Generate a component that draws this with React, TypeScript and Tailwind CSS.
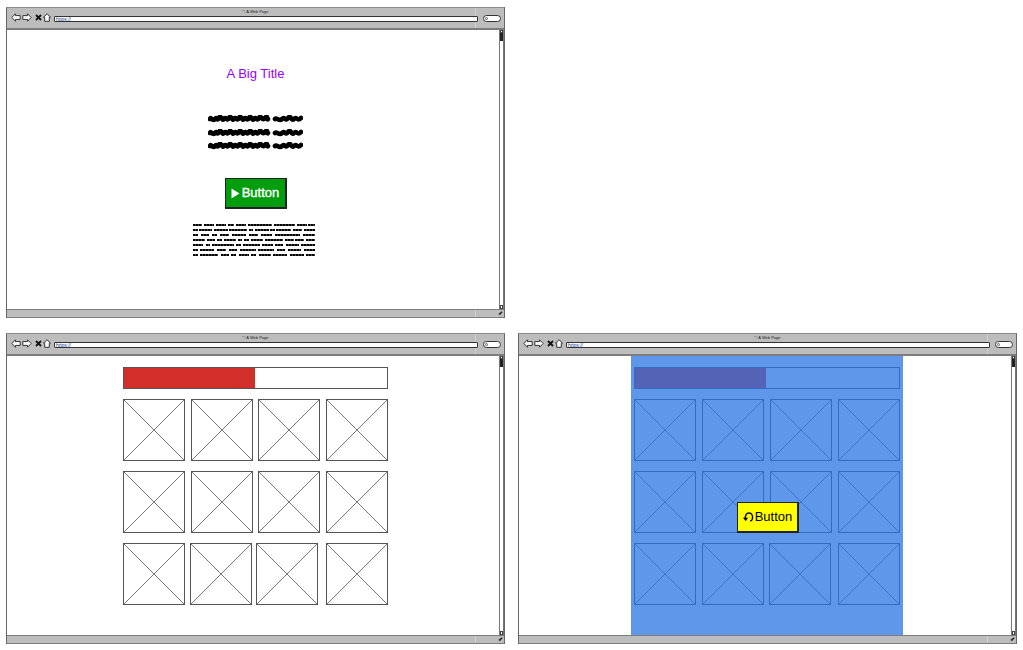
import React from 'react';

const bodyLines = [
  [10, 10, 11, 7, 11, 25, 23, 10, 7],
  [5, 14, 15, 19, 5, 15, 5, 16, 10, 12],
  [5, 9, 5, 10, 14, 10, 12, 26, 13],
  [13, 9, 5, 13, 5, 5, 13, 20, 9, 9, 10],
  [11, 5, 23, 5, 18, 11, 9, 14, 15],
  [5, 15, 10, 9, 17, 17, 9, 14, 12],
  [5, 19, 9, 5, 11, 5, 13, 15, 15, 9],
];

// margins of the last row, its cells sit a bit off the rows above
const lastRowOffsets = ['', 'ml-[5px]', 'ml-[4px]', 'ml-[8px]'];
const lastRowOffsetsWide = ['', 'ml-[6px]', 'ml-[5px]', 'ml-[7px]'];

function Scribble() {
  const wave =
    'M2 4 C3 1 5 7 7 4 S9 7 11 3 S14 7 16 4 S19 7 21 3 S24 7 26 4 S29 7 31 3 S34 7 36 4 S39 7 41 3 S44 7 46 4 S49 7 51 3 S54 7 57 3 S59 6 60 4';
  const wave2 = 'M67 4 C69 2 71 7 74 4 S77 7 80 3 S83 7 86 4 S89 7 93 3';
  return (
    <svg width="95" height="9" viewBox="0 0 95 9" fill="none" stroke="#000" strokeWidth="4.6" strokeLinecap="round">
      <path d={wave} />
      <path d={wave2} />
    </svg>
  );
}

function PlayIcon() {
  return (
    <svg width="9" height="11" viewBox="0 0 9 11" fill="#fff">
      <path d="M0.5 0.5 L8.5 5.5 L0.5 10.5 Z" />
    </svg>
  );
}

function RefreshIcon() {
  return (
    <svg width="11" height="10" viewBox="0 0 11 10" fill="none" stroke="#000" strokeWidth="1.4">
      <path d="M2.6 7 C1.6 3.5 3.6 1 6 1 C8.6 1 10.4 3.6 9.2 7.5 C8.8 8.4 8 8.8 7.2 9" />
      <path d="M0 5.8 L2.8 9.2 L5 5.8 Z" fill="#000" stroke="none" />
    </svg>
  );
}

function ChromeIcons() {
  return (
    <div className="mb-[2px] flex items-center">
      <svg width="10" height="9" viewBox="0 0 10 9" fill="#fff" stroke="#333" strokeWidth="1">
        <path d="M0.8 4.5 L4.5 0.8 V2.6 H9.2 V6.4 H4.5 V8.2 Z" />
      </svg>
      <svg width="10" height="9" viewBox="0 0 10 9" fill="#fff" stroke="#333" strokeWidth="1" className="ml-[1px]">
        <path d="M9.2 4.5 L5.5 0.8 V2.6 H0.8 V6.4 H5.5 V8.2 Z" />
      </svg>
      <svg width="7" height="7" viewBox="0 0 7 7" stroke="#111" strokeWidth="1.8" className="ml-[3px]">
        <path d="M1 1 L6 6 M6 1 L1 6" />
      </svg>
      <svg width="8" height="9" viewBox="0 0 8 9" fill="#fff" stroke="#333" strokeWidth="1" className="ml-[1px]">
        <path d="M4 0.7 L7.5 4.2 H6.3 V8.3 H1.7 V4.2 H0.5 Z" />
      </svg>
    </div>
  );
}

function Window({ children }: { children?: React.ReactNode }) {
  return (
    <div className="relative flex h-[311px] w-[499px] flex-col border-x border-t border-x-[#666] border-t-[#8a8a8a] bg-white">
      <div className="relative h-[22px] shrink-0 border-b-2 border-b-[#7d7d7d] bg-[#bdbdbd]">
        <div className="absolute bottom-0 right-[28px] top-0 w-px bg-[#d2d2d2]" />
        <div className="absolute inset-x-0 top-[1px] text-center text-[4px] leading-[5px] text-[#222]">🗋 A Web Page</div>
        <div className="relative flex h-full items-center pl-[4px] pr-[3px] pt-[1px]">
          <ChromeIcons />
          <div className="ml-[3px] flex h-[6px] flex-1 items-center rounded-[1px] border border-[#333] bg-white pl-[1px] text-[5px] leading-[4px] text-[#25408f]">
            https://
          </div>
          <div className="ml-[5px] flex h-[7px] w-[18px] items-center rounded-full border border-[#333] bg-white pl-[1px]">
            <div className="h-[3px] w-[3px] rounded-full border border-[#555]" />
          </div>
        </div>
      </div>
      <div className="relative min-h-0 flex-1">
        {children}
        <div className="absolute inset-y-0 right-0 flex w-[5px] flex-col items-center justify-between border-x border-x-[#777] bg-white">
          <div className="flex flex-col items-center">
            <div className="h-[3px] w-[3px] border border-[#444]" />
            <div className="h-[8px] w-[3px] bg-[#222]" />
          </div>
          <div className="h-[4px] w-[3px] border border-[#444]" />
        </div>
      </div>
      <div className="relative flex h-[9px] shrink-0 justify-end border-y border-y-[#7d7d7d] bg-[#bdbdbd] pr-[1px]">
        <div className="absolute bottom-0 right-[28px] top-0 w-px bg-[#d2d2d2]" />
        <div className="text-[6px] leading-[6px] text-[#222]">⬋</div>
      </div>
    </div>
  );
}

function LandingContent() {
  return (
    <div className="flex flex-col items-center">
      <h1 className="mt-[36px] text-[13px] leading-[16px] text-[#9900ff]">A Big Title</h1>
      <div className="mt-[33px] flex flex-col gap-[4.5px]">
        <Scribble />
        <Scribble />
        <Scribble />
      </div>
      <button className="mt-[27px] flex h-[31px] w-[62px] items-center justify-center gap-[2px] border border-b-2 border-r-2 border-[#222] bg-[#009d0d] text-[13px] text-white [-webkit-text-stroke:0.35px_white]">
        <PlayIcon />
        Button
      </button>
      <div className="mr-[3px] mt-[15px] flex w-[122px] flex-col gap-[3px]">
        {bodyLines.map((line, i) => (
          <div key={i} className="flex h-[2px] justify-between">
            {line.map((w, j) => (
              <span
                key={j}
                className="h-[2px] bg-[repeating-linear-gradient(90deg,#000_0_2px,#444_2px_3px)]"
                style={{ width: w * 0.94 }}
              />
            ))}
          </div>
        ))}
      </div>
    </div>
  );
}

function Placeholder({ className = '' }: { className?: string }) {
  return (
    <svg width="62" height="62" viewBox="0 0 62 62" fill="#fff" className={`block shrink-0 ${className}`}>
      <path d="M0.5 0.5 L61.5 61.5 M61.5 0.5 L0.5 61.5" stroke="#777" strokeWidth="1" />
      <rect x="0.5" y="0.5" width="61" height="61" fill="none" stroke="#555" strokeWidth="1" />
    </svg>
  );
}

function GalleryContent({ wide = false }: { wide?: boolean }) {
  const width = wide ? 'w-[266px]' : 'w-[265px]';
  const offsets = wide ? lastRowOffsetsWide : lastRowOffsets;
  return (
    <div className={`flex flex-col items-center ${wide ? 'pr-[1px]' : ''}`}>
      <div className={`mt-[11px] flex h-[22px] border border-[#555] bg-white ${width}`}>
        <div className="h-full w-[131px] bg-[#d32f2a]" />
      </div>
      <div className={`mt-[10px] flex flex-col gap-[10px] ${width}`}>
        {[0, 1].map((row) => (
          <div key={row} className="flex justify-between">
            {[0, 1, 2, 3].map((col) => (
              <Placeholder key={col} />
            ))}
          </div>
        ))}
        <div className="flex">
          {offsets.map((offset, col) => (
            <Placeholder key={col} className={offset} />
          ))}
        </div>
      </div>
    </div>
  );
}

export default function App() {
  return (
    <div className="h-[650px] w-[1023px] overflow-hidden bg-white pl-[6px] pt-[7px]" style={{ fontFamily: '"Liberation Sans", Arial, sans-serif' }}>
      <div className="grid grid-cols-[499px_499px] grid-rows-[311px_311px] gap-x-[13px] gap-y-[15px]">
        <Window>
          <LandingContent />
        </Window>
        <div />
        <Window>
          <GalleryContent />
        </Window>
        <Window>
          <GalleryContent wide />
          <div className="absolute inset-y-0 left-[112px] w-[272px] bg-[#2975e4]/75" />
          <button className="absolute left-[218px] top-[146px] flex h-[31px] w-[62px] items-center justify-center gap-[1px] border border-b-2 border-r-2 border-[#222] bg-[#ffff00] text-[13px] text-black">
            <RefreshIcon />
            Button
          </button>
        </Window>
      </div>
    </div>
  );
}
